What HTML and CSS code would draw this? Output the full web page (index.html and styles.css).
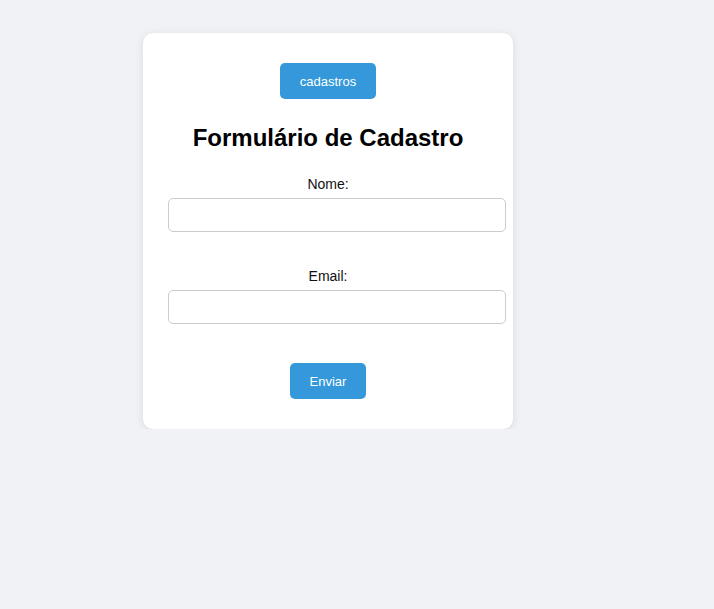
FILE: index.html
```html
<!DOCTYPE html>
<html lang="pt">
<head>
<meta charset="utf-8">
<title>Formulário de Cadastro</title>
<link rel="stylesheet" href="styles.css">
</head>
<body>
<div class="card">
  <div class="top">
    <button class="btn" type="button">cadastros</button>
  </div>
  <h2 class="title">Formulário de Cadastro</h2>
  <form class="form">
    <label class="label" for="nome">Nome:</label>
    <input class="input" id="nome" type="text">
    <label class="label label-gap" for="email">Email:</label>
    <input class="input" id="email" type="email">
    <div class="actions">
      <button class="btn" type="submit">Enviar</button>
    </div>
  </form>
</div>
</body>
</html>
```
FILE: styles.css
```css
html, body {
  margin: 0;
  padding: 0;
}
body {
  background: #f0f2f5;
  font-family: "Liberation Sans", Arial, sans-serif;
  color: #000;
}
.card {
  box-sizing: border-box;
  width: 370px;
  margin: 33px 0 0 143px;
  padding: 30px 25px;
  background: #fff;
  border-radius: 10px;
  box-shadow: 0 2px 10px rgba(0, 0, 0, 0.1);
  text-align: center;
}
.top {
  display: flex;
  justify-content: center;
}
.btn {
  height: 36px;
  padding: 0 20px;
  border: none;
  border-radius: 5px;
  background: #3498db;
  color: #fff;
  font-family: "Liberation Sans", Arial, sans-serif;
  font-size: 13px;
  cursor: pointer;
}
.title {
  margin: 25px 0 24px;
  font-size: 24px;
  line-height: 28px;
  font-weight: bold;
}
.form {
  margin: 0;
}
.label {
  display: block;
  margin: 0 0 6px;
  font-size: 14px;
  line-height: 16px;
  color: #111;
}
.label-gap {
  margin-top: 36px;
}
.input {
  display: block;
  width: 100%;
  height: 16px;
  padding: 8px;
  margin: 0;
  border: 1px solid #ccc;
  border-radius: 5px;
  font-family: "Liberation Sans", Arial, sans-serif;
  font-size: 14px;
  background: #fff;
}
.actions {
  display: flex;
  justify-content: center;
  margin-top: 39px;
}
```
